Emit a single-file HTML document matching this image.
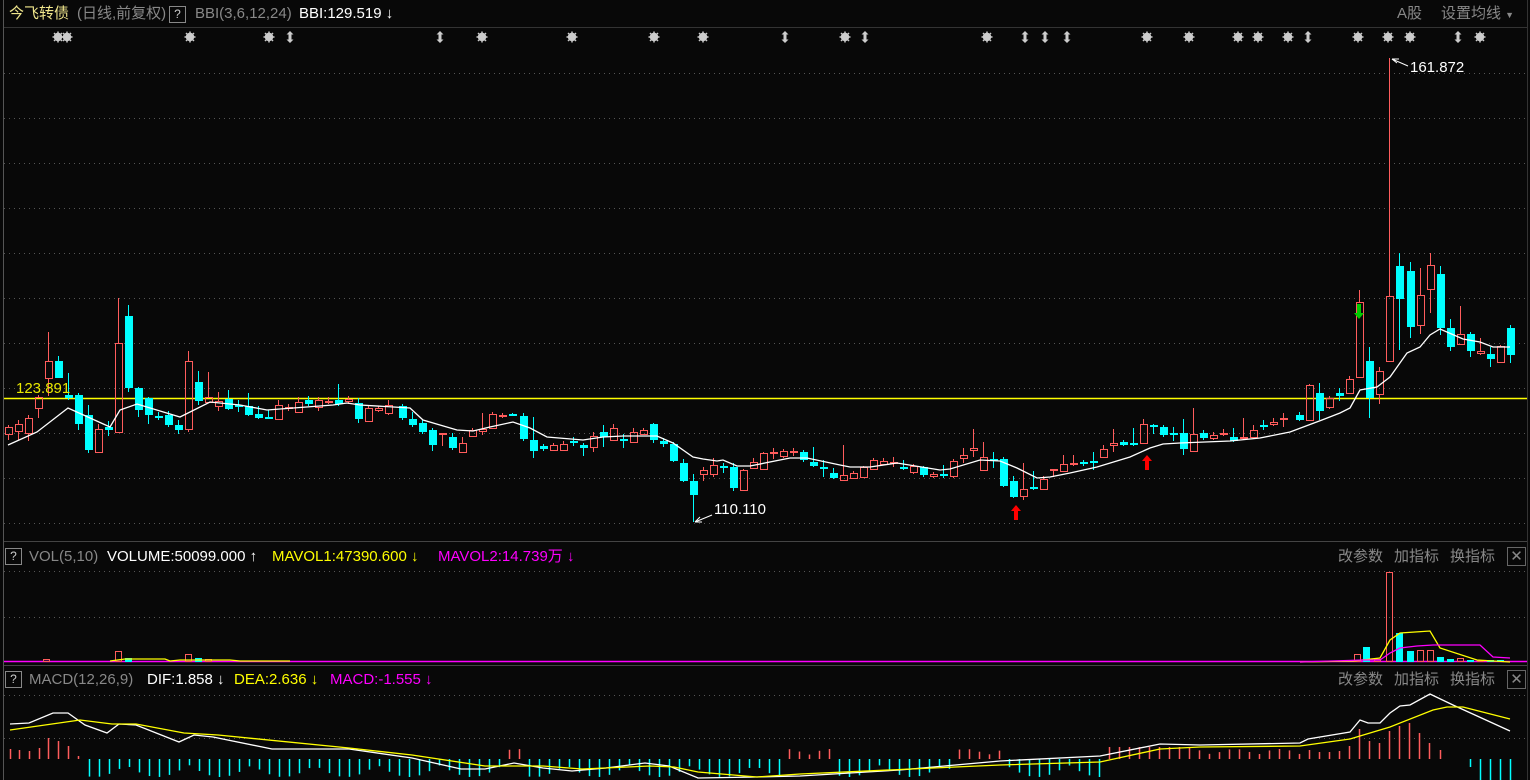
<!DOCTYPE html>
<html><head><meta charset="utf-8">
<style>
*{margin:0;padding:0;box-sizing:border-box}
body{width:1530px;height:780px;background:#080808;overflow:hidden;position:relative;font-family:"Liberation Sans","Noto Sans CJK SC",sans-serif;font-size:15px}
.t{position:absolute;white-space:nowrap;line-height:16px}
.q{position:absolute;width:17px;height:17px;border:1px solid #888;color:#ccc;font-size:12px;text-align:center;line-height:15px}
.x{position:absolute;width:19px;height:19px;border:1px solid #666;color:#888;font-size:15px;text-align:center;line-height:17px}
svg{position:absolute;left:0;top:0}
</style></head><body>
<svg id="s" width="1530" height="780"></svg>
<div class="t" style="left:9px;top:6px;color:#f0e68c">今飞转债</div>
<div class="t" style="left:77px;top:6px;color:#888">(日线,前复权)</div>
<div class="q" style="left:169px;top:6px">?</div>
<div class="t" style="left:195px;top:6px;color:#888">BBI(3,6,12,24)</div>
<div class="t" style="left:299px;top:6px;color:#fff">BBI:129.519 ↓</div>
<div class="t" style="left:1397px;top:6px;color:#888">A股</div>
<div class="t" style="left:1441px;top:6px;color:#888">设置均线 <span style="font-size:9px">▼</span></div>
<div class="t" style="left:16px;top:381px;color:#e8e800">123.891</div>
<div class="t" style="left:714px;top:502px;color:#fff">110.110</div>
<div class="t" style="left:1410px;top:60px;color:#fff">161.872</div>

<div class="q" style="left:5px;top:548px">?</div>
<div class="t" style="left:29px;top:549px;color:#888">VOL(5,10)</div>
<div class="t" style="left:107px;top:549px;color:#fff">VOLUME:50099.000 ↑</div>
<div class="t" style="left:272px;top:549px;color:#ff0">MAVOL1:47390.600 ↓</div>
<div class="t" style="left:438px;top:549px;color:#f0f">MAVOL2:14.739万 ↓</div>
<div class="t" style="left:1338px;top:549px;color:#888">改参数</div>
<div class="t" style="left:1394px;top:549px;color:#888">加指标</div>
<div class="t" style="left:1450px;top:549px;color:#888">换指标</div>
<div class="x" style="left:1507px;top:547px">✕</div>

<div class="q" style="left:5px;top:671px">?</div>
<div class="t" style="left:29px;top:672px;color:#888">MACD(12,26,9)</div>
<div class="t" style="left:147px;top:672px;color:#fff">DIF:1.858 ↓</div>
<div class="t" style="left:234px;top:672px;color:#ff0">DEA:2.636 ↓</div>
<div class="t" style="left:330px;top:672px;color:#f0f">MACD:-1.555 ↓</div>
<div class="t" style="left:1338px;top:672px;color:#888">改参数</div>
<div class="t" style="left:1394px;top:672px;color:#888">加指标</div>
<div class="t" style="left:1450px;top:672px;color:#888">换指标</div>
<div class="x" style="left:1507px;top:670px">✕</div>
<script>
var R="#ff5c5c",C="#00ffff",o=[];
function L(x1,y1,x2,y2,c,w,d){o.push('<line x1="'+x1+'" y1="'+y1+'" x2="'+x2+'" y2="'+y2+'" stroke="'+c+'" stroke-width="'+(w||1)+'"'+(d?' stroke-dasharray="'+d+'"':'')+'/>');}
function P(pts,c){o.push('<polyline fill="none" stroke="'+c+'" stroke-width="1.3" points="'+pts+'"/>');}
L(3.5,0,3.5,780,"#555");L(1527.5,0,1527.5,780,"#333");
L(4,27.5,1527,27.5,"#333");L(4,541.5,1527,541.5,"#444");L(4,665.5,1527,665.5,"#444");
[73,118,163,208,253,298,343,388,433,478,523].forEach(function(y){L(4,y+.5,1527,y+.5,"#555",1,"1 4");});
[571,617].forEach(function(y){L(4,y+.5,1527,y+.5,"#555",1,"1 4");});
[695,738].forEach(function(y){L(4,y+.5,1527,y+.5,"#555",1,"1 4");});
L(4,398.5,1527,398.5,"#ffff00",1.5);
var K=[[8,434,427,425,440],[18,431,424,420,440],[28,433,418,415,441],[38,408,397,395,418],[48,378,361,332,396],[58,361,378,356,378],[68,395,398,373,400],[78,395,424,393,430],[88,415,450,405,453],[98,452,429,424,452],[108,427,430,421,436],[118,432,343,298,432],[128,316,388,305,392],[138,388,410,387,417],[148,398,415,397,424],[158,416,418,412,420],[168,415,425,411,427],[178,425,430,420,434],[188,429,361,351,432],[198,382,401,371,405],[208,402,397,372,403],[218,406,401,392,411],[228,399,409,390,410],[238,405,406,400,412],[248,406,415,393,416],[258,414,418,406,419],[268,417,418,410,419],[278,419,405,400,419],[288,408,407,404,411],[298,412,402,397,413],[308,400,404,396,406],[318,407,400,397,411],[328,402,401,397,404],[338,400,404,384,406],[348,401,399,396,404],[358,403,419,398,423],[368,421,408,405,421],[378,410,408,406,412],[388,413,405,400,415],
[402,406,418,404,420],[412,419,425,412,427],[422,423,432,420,434],[432,430,445,428,451],[442,434,433,433,446],[452,437,448,433,450],[462,452,443,437,453],[472,436,430,428,437],[482,431,429,413,435],[492,428,414,412,428],[502,416,415,413,418],[512,414,415,413,416],[523,416,439,413,441],[533,440,451,417,458],[543,446,449,444,451],[553,450,445,443,451],[563,450,444,441,451],[573,441,442,437,446],[583,445,448,443,456],[593,447,436,432,452],[603,432,437,425,447],[613,440,428,424,441],[623,439,440,434,448],[633,442,432,428,443],[643,434,430,428,435],[653,424,440,423,443],[663,441,444,438,447],[673,444,461,442,462],[683,463,481,459,482],[693,481,495,474,522],[703,474,470,467,481],[713,474,465,458,477],[723,466,467,463,473],[733,467,488,463,491],[743,490,470,469,491],[753,468,462,458,469],[763,469,453,452,470],[773,453,452,448,459],[783,456,451,449,458],[793,452,451,448,456],[803,452,460,450,462],[813,462,466,447,467],[823,467,468,460,477],[833,473,478,468,479],
[843,480,475,445,481],[853,478,473,471,479],[863,477,467,466,478],[873,469,460,458,470],[883,464,461,458,465],[893,463,462,457,467],[903,467,468,460,470],[913,472,466,464,474],[923,467,475,466,477],[933,476,474,472,478],[943,474,475,465,478],[953,476,461,459,478],[963,458,455,448,463],[973,450,448,429,457],[983,470,457,442,471],[993,459,460,452,468],[1003,459,486,457,487],[1013,481,497,476,498],[1023,496,489,463,500],[1033,487,488,471,490],[1043,489,479,476,490],[1053,470,469,469,477],[1063,471,464,455,472],[1073,464,463,455,466],[1083,462,464,460,466],[1093,461,462,452,470],[1103,457,449,445,458],[1113,445,443,429,452],[1123,442,445,440,446],[1133,443,444,428,446],[1143,443,424,419,444],[1153,425,427,424,434],[1163,427,435,425,437],[1173,433,434,427,441],[1183,433,449,419,455],[1193,451,434,408,452],[1203,433,438,430,440],[1213,438,435,432,440],[1223,434,433,429,436],[1233,437,441,428,442],[1243,438,437,418,440],[1253,437,430,425,438],[1263,425,427,420,430],[1273,424,422,418,426],[1283,419,418,413,427],
[1299,415,420,412,421],[1309,420,385,384,421],[1319,393,411,383,420],[1329,407,398,396,409],[1339,393,396,388,401],[1349,393,379,376,394],[1359,377,302,290,378],[1369,361,398,347,418],[1379,394,371,367,404],[1389,361,296,58,362],[1399,266,299,253,350],[1410,271,327,262,338],[1420,325,295,268,334],[1430,289,265,253,313],[1440,274,328,266,335],[1450,328,347,319,351],[1460,344,334,306,345],[1470,334,351,332,357],[1480,353,351,338,355],[1490,354,359,347,367],[1500,362,346,345,363],[1510,328,355,325,363]];
K.forEach(function(k){var x=k[0],a=k[1],c=k[2],h=k[3],l=k[4];var red=c<=a;var col=red?R:C;
 if(red&&c<a){var t=c,b=a;L(x+.5,h,x+.5,t,col);L(x+.5,b,x+.5,l,col);o.push('<rect x="'+(x-2.5)+'" y="'+(t+.5)+'" width="7" height="'+Math.max(b-t,1)+'" fill="none" stroke="'+col+'"/>');}
 else{var t=Math.min(a,c),b=Math.max(a,c);L(x+.5,h,x+.5,l,col);o.push('<rect x="'+(x-3)+'" y="'+t+'" width="8" height="'+Math.max(b-t,2)+'" fill="'+col+'"/>');}
});
P("8,445 37,432 68,408 110,427 120,410 137,404 180,417 210,402 240,405 267,410 333,405 347,403 360,405 410,408 423,420 457,430 473,431 490,427 513,422 530,428 547,437 583,440 603,437 623,436 657,436 673,443 693,457 703,459 717,461 723,460 737,466 750,466 790,458 807,458 840,465 850,467 870,467 897,463 940,470 950,469 980,460 1000,461 1017,468 1037,478 1050,477 1070,473 1097,467 1130,457 1150,448 1163,444 1180,443 1230,441 1260,438 1290,432 1322,420 1340,413 1350,408 1360,390 1377,387 1390,377 1407,353 1420,347 1430,335 1440,329 1463,339 1480,342 1493,347 1510,347","#fff");
L(695,522,712,515,"#fff");L(1392,59,1408,66,"#fff");
o.push('<path d="M695 522 l5 -5 M695 522 l7 0" stroke="#fff" fill="none"/>');
o.push('<path d="M1392 59 l7 0 M1392 59 l5 4" stroke="#fff" fill="none"/>');
function up(x,y,c){o.push('<path d="M'+x+' '+y+' l-5 6 h3 v9 h4 v-9 h3 z" fill="'+c+'"/>');}
up(1016,505,"#f00");up(1147,455,"#f00");
o.push('<path d="M1359 319 l-5 -6 h3 v-9 h4 v9 h3 z" fill="#0c0"/>');
var G=[58,67,190,269,482,572,654,703,845,987,1147,1189,1238,1258,1288,1358,1388,1410,1480],A=[290,440,785,865,1025,1045,1067,1308,1458];
G.forEach(function(x){o.push('<circle cx="'+x+'" cy="37" r="4.2" fill="#ccc"/>');L(x-5.5,37,x+5.5,37,"#ccc",1.5);L(x,31.5,x,42.5,"#ccc",1.5);L(x-4,33,x+4,41,"#ccc",1.5);L(x-4,41,x+4,33,"#ccc",1.5);});
A.forEach(function(x){o.push('<path d="M'+x+' 31 l-3.5 3.5 h2 v5 h-2 l3.5 3.5 l3.5 -3.5 h-2 v-5 h2 z" fill="#ccc"/>');});
L(4,661.5,1527,661.5,"#ff00ff",1.5);
[[46,659,662,R],[118,651,662,R],[128,658,662,C],[188,654,662,R],[198,658,662,C],[208,659,662,R],[1357,654,662,R],[1366,647,662,C],[1377,659,662,R],[1389,572,662,R],[1399,633,662,C],[1410,651,662,C],[1420,650,662,R],[1430,650,662,R],[1440,657,662,C],[1450,659,662,C],[1460,658,662,R],[1470,660,662,C],[1480,660,662,R],[1490,660,662,C],[1500,660,662,C]].forEach(function(v){if(v[3]==R)o.push('<rect x="'+(v[0]-2.5)+'" y="'+(v[1]+.5)+'" width="6" height="'+(v[2]-v[1]-1)+'" fill="none" stroke="'+R+'"/>');else o.push('<rect x="'+(v[0]-3)+'" y="'+v[1]+'" width="7" height="'+(v[2]-v[1])+'" fill="'+C+'"/>');});
P("110,661 125,659 165,659 170,661 180,660 230,660 240,661 290,661","#ff0");
P("1300,662 1353,661 1380,658 1390,640 1400,633 1430,631 1440,648 1477,660 1510,662","#ff0");
P("1300,662 1363,660 1380,660 1390,653 1400,648 1417,646 1433,645 1480,645 1493,657 1510,658","#f0f");
[[10,749],[19,750],[29,751],[39,748],[48,738],[58,741],[68,746],[78,756]].forEach(function(b){L(b[0]+.5,759,b[0]+.5,b[1],R,1.5);});
for(var x=89;x<1300;x+=10){var red=(x>=500&&x<=525)||(x>=780&&x<=830)||(x>=950&&x<=1000)||(x>=1100&&x<=1300);
 var h=red?4+Math.abs(Math.sin(x*0.07))*6:6+Math.abs(Math.sin(x*0.05))*12; if(x>1100&&x<1190)h=12;
 L(x+.5,759,x+.5,red?759-h:759+h,red?R:C,1.5);}
[[1309,750],[1319,752],[1329,752],[1339,751],[1349,746],[1359,729],[1369,741],[1379,743],[1389,731],[1399,726],[1409,723],[1419,733],[1429,743],[1440,750]].forEach(function(b){L(b[0]+.5,759,b[0]+.5,b[1],R,1.5);});
[[1470,767],[1480,780],[1490,780],[1500,780],[1510,780]].forEach(function(b){L(b[0]+.5,759,b[0]+.5,b[1],C,1.5);});
P("10,724 29,723 53,713 68,713 85,725 107,733 119,724 136,725 179,742 194,735 213,737 272,749 349,749 412,758 461,769 485,769 514,763 543,768 572,771 606,768 645,763 669,766 698,778 757,777 800,776 900,770 1000,761 1100,756 1160,744 1200,745 1300,743 1308,739 1350,732 1360,720 1368,723 1380,723 1390,713 1400,706 1410,705 1430,694 1453,705 1510,731","#fff");
P("10,730 80,720 112,724 136,724 184,733 218,735 349,748 412,755 485,766 543,766 582,769 650,766 674,767 698,772 757,777 800,774 1000,765 1100,762 1160,749 1200,747 1300,746 1350,739 1390,727 1433,710 1447,707 1463,707 1510,719","#ff0");
document.getElementById("s").innerHTML=o.join("");
</script>
</body></html>
